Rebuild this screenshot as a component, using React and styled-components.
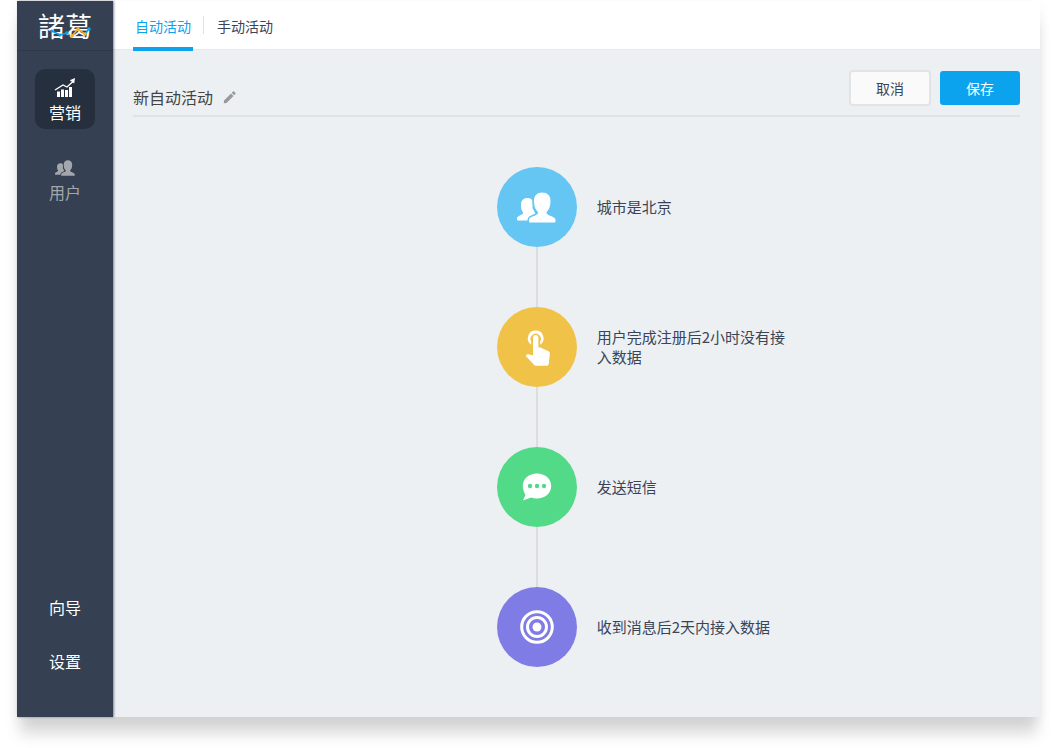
import React, { useState } from 'react';
import styled, { createGlobalStyle, css } from 'styled-components';

const GlobalStyle = createGlobalStyle`
  * {
    box-sizing: border-box;
  }

  body {
    margin: 0;
    background: #fff;
    color: #3b4456;
    font-family: "Noto Sans CJK SC", sans-serif;
    font-size: 14px;
    line-height: 20px;
  }

  button {
    font: inherit;
  }
`;

const Page = styled.div`
  min-height: 100vh;
  padding: 1px 15px 31px 17px;
  display: flex;
`;

const Window = styled.div`
  flex: 1;
  display: flex;
  background: #ecf0f3;
  box-shadow: 0 20px 14px -3px rgba(0, 0, 0, 0.15), 0 4px 12px rgba(0, 0, 0, 0.05);
`;

const Sidebar = styled.aside`
  width: 96px;
  flex: none;
  display: flex;
  flex-direction: column;
  background: #354052;
  box-shadow: 1px 0 2px rgba(53, 64, 82, 0.6);
  z-index: 1;
`;

const Logo = styled.h1`
  position: relative;
  height: 50px;
  margin: 0;
  border-bottom: 1px solid #2e3848;
  color: #fff;
  font-family: "Noto Sans CJK TC", sans-serif;
  font-size: 27px;
  font-weight: 400;
  line-height: 50px;
  text-align: center;
`;

const LogoChart = styled.svg`
  position: absolute;
  top: 25px;
  left: 33px;
  width: 42px;
  height: 14px;
`;

const Menu = styled.nav`
  flex: 1;
  padding: 18px;
  display: flex;
  flex-direction: column;
  align-items: center;
`;

const MenuLink = styled.a`
  width: 60px;
  height: 60px;
  margin-bottom: 20px;
  padding-top: 9px;
  display: flex;
  flex-direction: column;
  align-items: center;
  gap: 2px;
  border-radius: 10px;
  color: #a3a7ac;
  font-size: 16px;
  line-height: 24px;
  text-decoration: none;

  ${(props) => props.$active && css`
    background: #262f3e;
    color: #fff;
  `}
`;

const FooterMenu = styled.div`
  margin-top: auto;
  padding-bottom: 26px;
  display: flex;
  flex-direction: column;
  gap: 30px;
`;

const FooterLink = styled.a`
  color: #fff;
  font-size: 16px;
  line-height: 24px;
  text-decoration: none;
`;

const Content = styled.div`
  flex: 1;
  min-width: 0;
`;

const TabBar = styled.nav`
  height: 49px;
  padding-left: 20px;
  display: flex;
  align-items: center;
  background: #fff;
  border-bottom: 1px solid #e6e9eb;
`;

const Tab = styled.a`
  height: 50px;
  margin-top: 2px;
  padding: 0 2px;
  border-bottom: 4px solid ${(props) => props.$active ? '#0ba3ee' : 'transparent'};
  color: ${(props) => props.$active ? '#0ba3ee' : '#3b4456'};
  line-height: 50px;
  text-decoration: none;
`;

const TabDivider = styled.span`
  width: 1px;
  height: 18px;
  margin: 0 11px 0 10px;
  background: #dfe1e4;
`;

const Main = styled.main`
  padding: 20px;
`;

const Header = styled.header`
  height: 47px;
  display: flex;
  justify-content: space-between;
  border-bottom: 2px solid #e0e2e4;
`;

const Title = styled.h2`
  height: 44px;
  margin: 0;
  padding-top: 10px;
  display: flex;
  align-items: center;
  gap: 10px;
  color: #444;
  font-size: 16px;
  font-weight: 400;
  line-height: 24px;
`;

const IconButton = styled.button`
  padding: 0;
  display: flex;
  border: 0;
  background: none;
  color: #999;
  cursor: pointer;
`;

const Actions = styled.div`
  display: flex;
  gap: 9px;
`;

const Button = styled.button`
  width: ${(props) => props.$primary ? '80px' : '82px'};
  height: 36px;
  padding: 0;
  border: 2px solid #e2e3e4;
  border-radius: 4px;
  background: #fafafa;
  color: #3b4456;
  line-height: 30px;
  cursor: pointer;

  ${(props) => props.$primary && css`
    height: 34px;
    margin-top: 1px;
    border: 0;
    border-radius: 3px;
    background: #0ba3ee;
    color: #fff;
  `}
`;

const Steps = styled.ol`
  margin: 50px 0 0 41%;
  padding: 0;
  list-style: none;
`;

const Step = styled.li`
  display: grid;
  grid-template-columns: 80px 190px;
  column-gap: 20px;
  align-items: center;
  font-size: 15px;

  &:not(:last-child)::after {
    content: '';
    width: 2px;
    height: 60px;
    justify-self: center;
    background: #dddddf;
  }
`;

const StepIcon = styled.span`
  width: 80px;
  height: 80px;
  display: flex;
  align-items: center;
  justify-content: center;
  border-radius: 50%;
  background: ${(props) => props.$color};
  color: #fff;
`;

const StepText = styled.span`
  color: #3b4456;
`;

const UsersIcon = ({ width, height, gap }) => (
  <svg width={width} height={height} viewBox="0 0 39 31" fill="currentColor" aria-hidden="true">
    <path d="M0 27.500v-1.300c0-2 3.500-2.700 5.500-4.200 1-.9.500-1.700-.3-3C4.300 17.500 4 15.500 4 12.500 4 8.500 6.500 6 10.500 6c2.300 0 4 .8 5 2.500V16l3 6-7 6.500H1q-1 0-1-1Z" />
    <path
      d="M25.200.5c-5 0-8.200 3.200-8.200 8 0 4 .6 8.300 3.300 10.700 1 1 .9 2.200 0 3-2 1.600-8.300 2.600-8.300 5.600v1.700q0 1 1 1h24.500q1 0 1-1v-1.700c0-3-6.300-4-8.300-5.600-.9-.8-1-2 0-3 2.700-2.400 3.300-6.700 3.300-10.700 0-4.800-3.300-8-8.300-8Z"
      stroke={gap}
      strokeWidth="3"
      paintOrder="stroke"
    />
  </svg>
);

const ChartIcon = () => (
  <svg width="22" height="20" viewBox="0 0 22 20" aria-hidden="true">
    <path d="M3 13.500h3V19H3zM7 11.500h3V19H7zM11 12h3v7h-3zM15 9h3v10h-3z" fill="currentColor" />
    <path d="m1 12 8-5 4 2 6-5.500" fill="none" stroke="currentColor" strokeWidth="1.300" />
    <path d="m21 0-.8 5.500-4.400-3.300Z" fill="currentColor" />
  </svg>
);

const PencilIcon = () => (
  <svg width="14" height="14" viewBox="0 0 14 14" fill="currentColor" aria-hidden="true">
    <path d="m1 10.500-.2 2.700 2.700-.2 7-7-2.500-2.500ZM8.700 2.800l2.500 2.500 1.200-1.200q.6-.6 0-1.200l-1.300-1.300q-.6-.6-1.200 0Z" />
  </svg>
);

const TouchIcon = () => (
  <svg width="30" height="40" viewBox="-4 -4 30 40" fill="currentColor" aria-hidden="true">
    <path d="M9.700-.5a7.800 7.800 0 0 0-4.500 14.200v-3.200a5.200 5.200 0 1 1 9 0v3.200A7.800 7.800 0 0 0 9.700-.5Z" />
    <path d="M9.700 4c-1.700 0-2.700 1.200-2.700 2.700v17.500l-5-1c-1-.2-2.200.9-2.200 1.900l8 8.500c.8.900 1.500 1.200 2.700 1.200h9.800c1.500 0 2.300-.9 2.500-2.300l1-9.300c.2-1.500-.5-2.500-1.800-3.100l-7.600-3.700h-2V6.700C12.400 5.200 11.400 4 9.700 4Z" />
  </svg>
);

const ChatIcon = () => (
  <svg width="30" height="28" viewBox="0 0 30 28" aria-hidden="true">
    <path d="M15 .5C7 .5.800 5.700.800 13c0 4 1.700 7 2.700 8.800L1 27.500l8.200-3.100c2 .8 3.800 1.100 5.800 1.100 8 0 14.200-5.200 14.200-12.500S23 .5 15 .5Z" fill="currentColor" />
    <g fill="#52da89">
      <circle cx="8" cy="13" r="2.200" />
      <circle cx="15" cy="13" r="2.200" />
      <circle cx="22" cy="13" r="2.200" />
    </g>
  </svg>
);

const TargetIcon = () => (
  <svg width="34" height="34" viewBox="0 0 34 34" fill="none" stroke="currentColor" strokeWidth="3" aria-hidden="true">
    <circle cx="17" cy="17" r="15.300" />
    <circle cx="17" cy="17" r="9.500" />
    <circle cx="17" cy="17" r="4.500" fill="currentColor" stroke="none" />
  </svg>
);

const steps = [
  { text: '城市是北京', color: '#65c6f4', icon: <UsersIcon width={39} height={31} gap="#65c6f4" /> },
  { text: '用户完成注册后2小时没有接入数据', color: '#f0c348', icon: <TouchIcon /> },
  { text: '发送短信', color: '#52da89', icon: <ChatIcon /> },
  { text: '收到消息后2天内接入数据', color: '#807ce5', icon: <TargetIcon /> },
];

const tabs = ['自动活动', '手动活动'];

const App = () => {
  const [tab, setTab] = useState(0);

  return (
    <>
      <GlobalStyle />
      <Page>
        <Window>
          <Sidebar>
            <Logo>
              諸葛
              <LogoChart viewBox="0 0 42 14" aria-hidden="true">
                <g fill="none" strokeWidth="1.500">
                  <path d="m2 5 8 4 7-2" stroke="#0ba3ee" />
                  <path d="m22 10 6-7 7 5" stroke="#f5b32e" />
                  <path d="m35 8 4-5" stroke="#0ba3ee" />
                </g>
                <g fill="#0ba3ee">
                  <circle cx="2" cy="5" r="1.500" />
                  <circle cx="10" cy="9" r="1.500" />
                  <circle cx="17" cy="7" r="1.800" />
                  <circle cx="39" cy="3" r="1.800" />
                </g>
                <g fill="#f5b32e">
                  <circle cx="22" cy="10" r="1.800" />
                  <circle cx="28" cy="3" r="1.800" />
                  <circle cx="35" cy="8" r="1.800" />
                </g>
              </LogoChart>
            </Logo>
            <Menu>
              <MenuLink href="#marketing" $active>
                <ChartIcon />
                营销
              </MenuLink>
              <MenuLink href="#users">
                <UsersIcon width={20} height={20} gap="#354052" />
                用户
              </MenuLink>
              <FooterMenu>
                <FooterLink href="#guide">向导</FooterLink>
                <FooterLink href="#settings">设置</FooterLink>
              </FooterMenu>
            </Menu>
          </Sidebar>
          <Content>
            <TabBar>
              {tabs.map((name, i) => (
                <React.Fragment key={name}>
                  {i > 0 && <TabDivider />}
                  <Tab href={`#tab-${i}`} $active={tab === i} onClick={() => setTab(i)}>{name}</Tab>
                </React.Fragment>
              ))}
            </TabBar>
            <Main>
              <Header>
                <Title>
                  新自动活动
                  <IconButton type="button" aria-label="编辑"><PencilIcon /></IconButton>
                </Title>
                <Actions>
                  <Button type="button">取消</Button>
                  <Button type="button" $primary>保存</Button>
                </Actions>
              </Header>
              <Steps>
                {steps.map(({ text, color, icon }) => (
                  <Step key={text}>
                    <StepIcon $color={color}>{icon}</StepIcon>
                    <StepText>{text}</StepText>
                  </Step>
                ))}
              </Steps>
            </Main>
          </Content>
        </Window>
      </Page>
    </>
  );
};

export default App;
